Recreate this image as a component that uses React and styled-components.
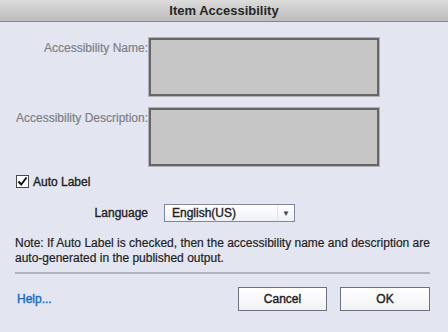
import styled, { createGlobalStyle } from "styled-components";

const Global = createGlobalStyle`
    body {
        margin: 0;
        background: #e3e6f1;
        font-family: "Liberation Sans", Arial, sans-serif;
    }
`;

const Dialog = styled.div`
    width: 448px;
    height: 332px;
    display: flex;
    flex-direction: column;
    background: #e3e6f1;
    color: #222;
    font-size: 12px;
`;

const TitleBar = styled.div`
    height: 21px;
    line-height: 21px;
    text-align: center;
    font-size: 13px;
    font-weight: bold;
    color: #262626;
    background: linear-gradient(#dcdcdc, #bcbcbc);
    border-bottom: 1px solid #858585;
`;

const Body = styled.div`
    padding: 16px 18px 0 15px;
    display: flex;
    flex-direction: column;
`;

const FieldGrid = styled.div`
    display: grid;
    grid-template-columns: 133px 230px;
    column-gap: 1px;
    row-gap: 12px;
`;

const FieldLabel = styled.div`
    text-align: right;
    color: #7f7f85;
    padding-top: 3px;
    line-height: 14px;
    white-space: nowrap;
    -webkit-text-stroke: 0.2px #7f7f85;
`;

const TextBox = styled.div`
    height: 54px;
    background: #c6c6c6;
    border: 2px solid #666;
    box-shadow: 0 0 0 1px #b0b0b6;
`;

const CheckRow = styled.label`
    display: flex;
    align-items: center;
    gap: 4px;
    margin: 9px 0 0 1px;
    height: 13px;
    -webkit-text-stroke: 0.35px #222;
`;

const LangRow = styled.div`
    display: grid;
    grid-template-columns: 133px 131px;
    column-gap: 16px;
    align-items: center;
    margin-top: 16px;
`;

const LangLabel = styled.div`
    text-align: right;
    -webkit-text-stroke: 0.35px #222;
`;

const Select = styled.div`
    height: 16px;
    display: flex;
    align-items: center;
    justify-content: space-between;
    padding: 0 0 0 7px;
    border: 1px solid #7c87a6;
    background: linear-gradient(#ffffff, #eef0f6);
    -webkit-text-stroke: 0.35px #222;
`;

const Arrow = styled.span`
    width: 16px;
    height: 16px;
    display: flex;
    align-items: center;
    justify-content: center;
    border-left: 1px solid #e2e4ea;
    font-size: 8px;
    color: #444;
    -webkit-text-stroke: 0;
`;

const Note = styled.p`
    margin: 14px 0 0;
    line-height: 15px;
    color: #1e1e1e;
    -webkit-text-stroke: 0.2px #1e1e1e;
`;

const Separator = styled.hr`
    margin: 6px 0 0;
    border: 0;
    height: 2px;
    background: #b2b4bd;
`;

const Footer = styled.div`
    display: flex;
    align-items: center;
    margin-top: 13px;
    gap: 13px;
`;

const HelpLink = styled.a`
    color: #1a6bc4;
    -webkit-text-stroke: 0.4px #1a6bc4;
    margin-left: 2px;
    margin-right: auto;
    cursor: pointer;
`;

const Button = styled.button`
    width: ${(p) => p.$w}px;
    height: 24px;
    font-family: inherit;
    font-size: 12px;
    color: #222;
    -webkit-text-stroke: 0.4px #222;
    background: linear-gradient(#ffffff, #f1f2f5);
    border: 1px solid #6e7080;
    border-radius: 0;
`;

function CheckIcon() {
    return (
        <svg width="13" height="13" viewBox="0 0 13 13">
            <rect x="0.5" y="0.5" width="12" height="12" fill="#fff" stroke="#4a4a4a" />
            <path d="M2.5 6.5 L5.2 9.5 L10.5 2.5" fill="none" stroke="#111" strokeWidth="2" />
        </svg>
    );
}

export default function App() {
    return (
        <Dialog>
            <Global />
            <TitleBar>Item Accessibility</TitleBar>
            <Body>
                <FieldGrid>
                    <FieldLabel>Accessibility Name:</FieldLabel>
                    <TextBox />
                    <FieldLabel>Accessibility Description:</FieldLabel>
                    <TextBox />
                </FieldGrid>
                <CheckRow>
                    <CheckIcon />
                    Auto Label
                </CheckRow>
                <LangRow>
                    <LangLabel>Language</LangLabel>
                    <Select>
                        English(US)
                        <Arrow>▼</Arrow>
                    </Select>
                </LangRow>
                <Note>
                    Note: If Auto Label is checked, then the accessibility name and description are
                    auto-generated in the published output.
                </Note>
                <Separator />
                <Footer>
                    <HelpLink>Help...</HelpLink>
                    <Button $w={89}>Cancel</Button>
                    <Button $w={90}>OK</Button>
                </Footer>
            </Body>
        </Dialog>
    );
}
